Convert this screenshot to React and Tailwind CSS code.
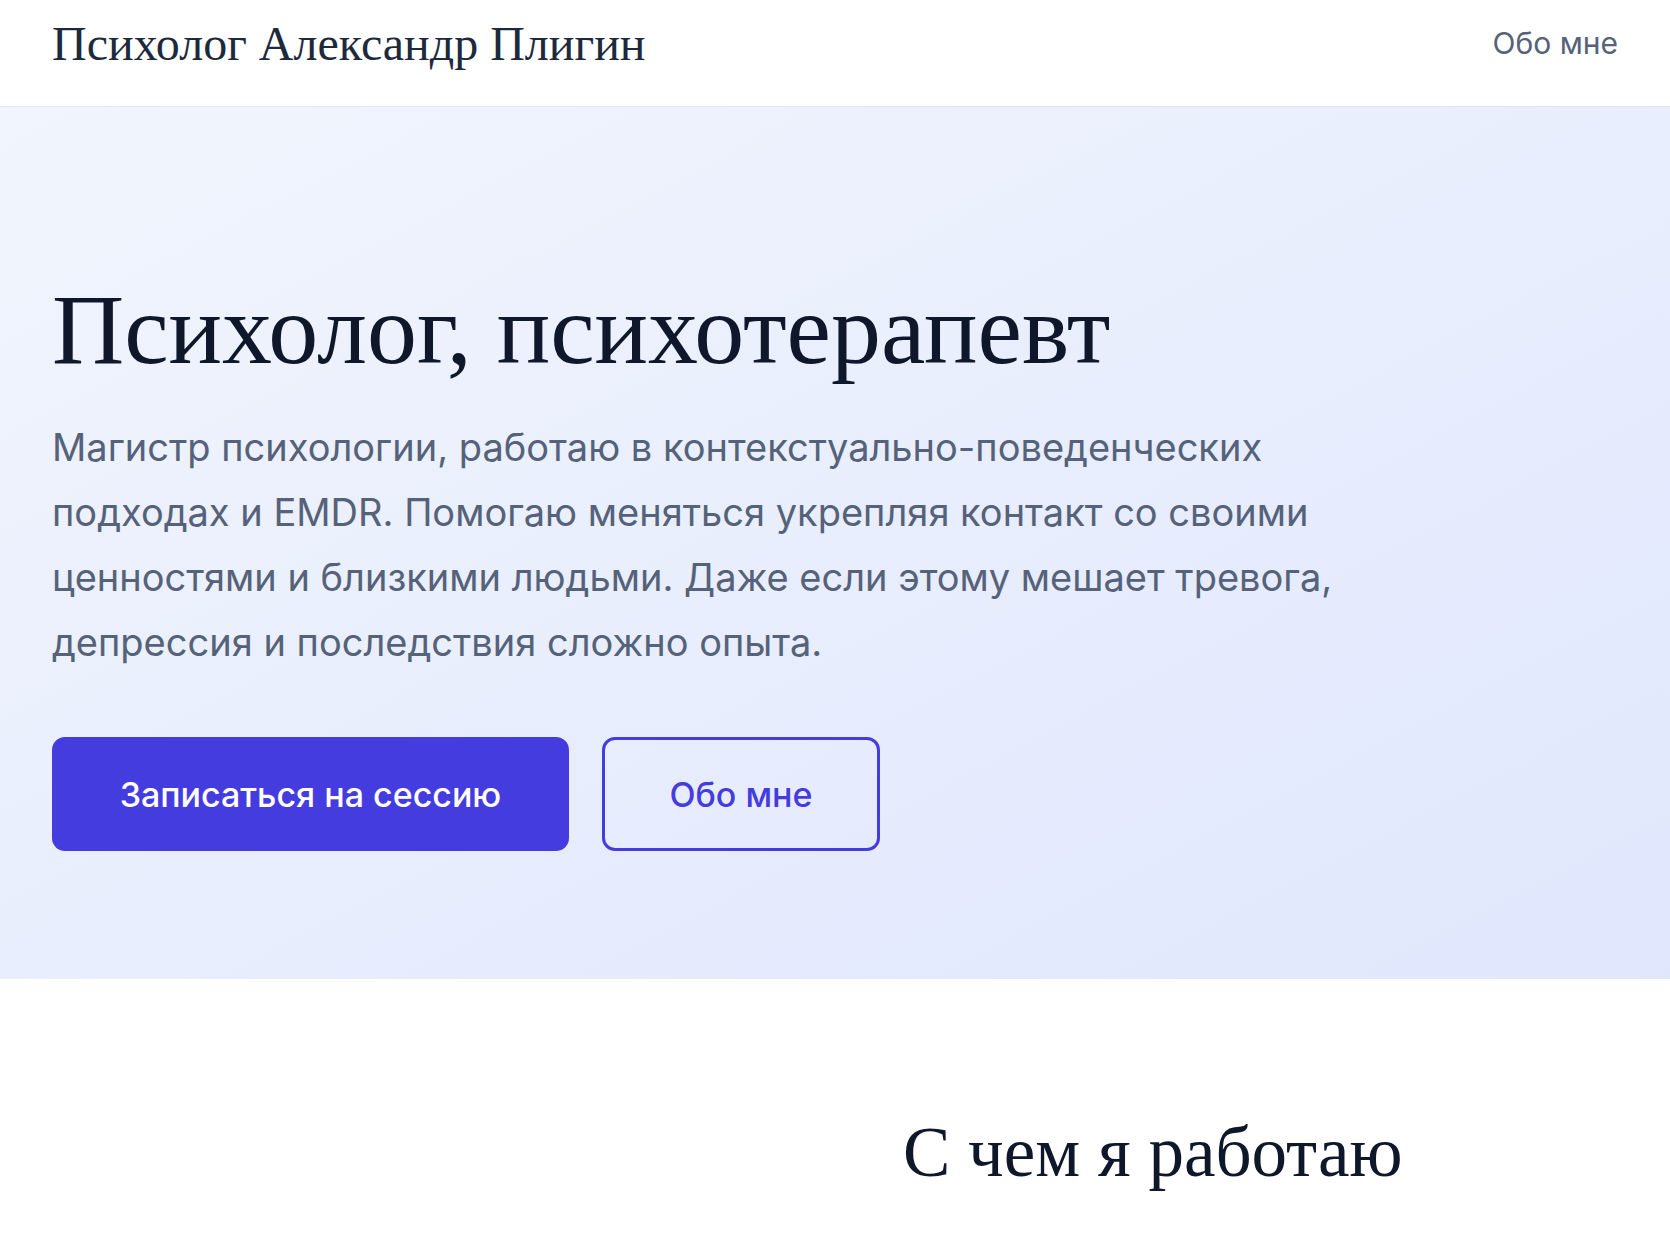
import React from 'react'

const serif = { fontFamily: '"Liberation Serif", "DejaVu Serif", serif' }

const Header = () => (
  <header className="flex items-center justify-between border-b border-[#dfe5f0] bg-white px-[52px] pt-[20px] pb-[38px]">
    <a href="#" className="text-[48px] leading-none text-slate-800" style={serif}>
      Психолог Александр Плигин
    </a>
    <nav>
      <a href="#about" className="text-[30px] leading-none text-[#556279]">
        Обо мне
      </a>
    </nav>
  </header>
)

const Hero = () => (
  <section className="bg-gradient-to-br from-[#f1f5fd] to-[#e0e7fd] px-[52px] pt-[173px] pb-[128px]">
    <h1 className="text-[100px] leading-none text-slate-900" style={serif}>
      Психолог, психотерапевт
    </h1>
    <p className="mt-[35px] max-w-[1330px] text-[38px] leading-[65px] text-[#556279]">
      Магистр психологии, работаю в контекстуально-поведенческих подходах и EMDR. Помогаю
      меняться укрепляя контакт со своими ценностями и близкими людьми. Даже если этому мешает
      тревога, депрессия и последствия сложно опыта.
    </p>
    <div className="mt-[62px] flex gap-[33px]">
      <button className="h-[114px] w-[517px] rounded-[13px] bg-[#453ce0] text-[34px] font-medium text-white">
        Записаться на сессию
      </button>
      <button className="h-[114px] w-[278px] rounded-[13px] border-[3px] border-[#453ce0] text-[34px] font-medium text-[#453ce0]">
        Обо мне
      </button>
    </div>
  </section>
)

const Topics = () => (
  <section className="bg-white px-[52px] pt-[138px] pb-[120px]">
    <h2 className="pl-[851px] text-[71px] leading-none text-slate-900" style={serif}>
      С чем я работаю
    </h2>
  </section>
)

export default function App() {
  return (
    <div className="min-h-screen bg-white" style={{ fontFamily: 'Inter, "Noto Sans", sans-serif' }}>
      <Header />
      <Hero />
      <Topics />
    </div>
  )
}
